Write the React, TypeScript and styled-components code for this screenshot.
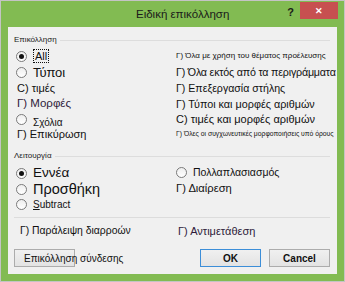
import styled, { createGlobalStyle } from "styled-components"

const GlobalStyle = createGlobalStyle`
  html, body {
    margin: 0;
    padding: 0;
    background: #ffffff;
  }
  * {
    box-sizing: border-box;
  }
`

export default function App() {
  return (
    <>
      <GlobalStyle />
      <DialogWindow>
        <TitleBar>
          <Title>Ειδική επικόλληση</Title>
          <HelpMark>?</HelpMark>
          <CloseButton>✕</CloseButton>
        </TitleBar>
        <Panel>
          <GroupHeader>
            <GroupLabel>Επικόλληση</GroupLabel>
            <GroupLine />
          </GroupHeader>
          <OptionGrid $rows="16px 17px 15px 16px 15px 14px">
            <Cell>
              <Radio $checked />
              <Label $size={11}>
                <FocusBox>All</FocusBox>
              </Label>
            </Cell>
            <Cell>
              <Label $size={8}>Γ) Όλα με χρήση του θέματος προέλευσης</Label>
            </Cell>
            <Cell>
              <Radio />
              <Label $size={13} $tight>
                Τύποι
              </Label>
            </Cell>
            <Cell>
              <Label $size={10.7} $tight>
                Γ) Όλα εκτός από τα περιγράμματα
              </Label>
            </Cell>
            <Cell $indent={1}>
              <Label $size={11}>C) τιμές</Label>
            </Cell>
            <Cell>
              <Label $size={10.6}>Γ) Επεξεργασία στήλης</Label>
            </Cell>
            <Cell $indent={1}>
              <Label $size={11.5} $color="#2e1b3a">
                Γ) Μορφές
              </Label>
            </Cell>
            <Cell>
              <Label $size={10.8}>Γ) Τύποι και μορφές αριθμών</Label>
            </Cell>
            <Cell>
              <Radio />
              <Label $size={10} $drop={3}>
                Σχόλια
              </Label>
            </Cell>
            <Cell>
              <Label $size={11}>C) τιμές και μορφές αριθμών</Label>
            </Cell>
            <Cell $indent={1}>
              <Label $size={11}>Γ) Επικύρωση</Label>
            </Cell>
            <Cell>
              <Label $size={6.8}>Γ) Όλες οι συγχωνευτικές μορφοποιήσεις υπό όρους</Label>
            </Cell>
          </OptionGrid>

          <GroupHeader $gap={10}>
            <GroupLabel>Λειτουργία</GroupLabel>
            <GroupLine />
          </GroupHeader>
          <OptionGrid $rows="16px 16px 15px" $gap={4}>
            <Cell>
              <Radio $checked />
              <Label $size={13.5}>Εννέα</Label>
            </Cell>
            <Cell $lift={2}>
              <Radio />
              <Label $size={10.5}>Πολλαπλασιασμός</Label>
            </Cell>
            <Cell>
              <Radio />
              <Label $size={14.5}>Προσθήκη</Label>
            </Cell>
            <Cell $lift={1}>
              <Label $size={11.2}>Γ) Διαίρεση</Label>
            </Cell>
            <Cell>
              <Radio />
              <Label $size={10}>
                <u>S</u>ubtract
              </Label>
            </Cell>
            <Cell />
          </OptionGrid>

          <Separator />

          <BottomRow>
            <Label $size={10.4}>Γ) Παράλειψη διαρροών</Label>
            <Label $size={11} $color="#2e1b3a">
              Γ) Αντιμετάθεση
            </Label>
          </BottomRow>

          <ButtonRow>
            <DialogButton $align="left">Επικόλληση σύνδεσης</DialogButton>
            <Spacer />
            <DialogButton $primary $bold>
              OK
            </DialogButton>
            <DialogButton $bold>Cancel</DialogButton>
          </ButtonRow>
        </Panel>
      </DialogWindow>
    </>
  )
}

const DialogWindow = styled.div`
  width: 345px;
  height: 282px;
  display: flex;
  flex-direction: column;
  background: #82bb52;
  border: 1px solid #c4c4c4;
  font-family: "Liberation Sans", Arial, sans-serif;
  color: #111;
`

const TitleBar = styled.div`
  height: 26px;
  display: flex;
  align-items: flex-start;
`

const Title = styled.div`
  flex: 1;
  padding-left: 77px;
  text-align: center;
  font-size: 11.5px;
  line-height: 26px;
  color: #1a1a1a;
`

const HelpMark = styled.div`
  margin-top: 6px;
  margin-right: 6px;
  font-size: 11px;
  font-weight: bold;
  line-height: 11px;
  color: #1a1a1a;
`

const CloseButton = styled.div`
  width: 38px;
  height: 17px;
  margin-top: 1px;
  margin-right: 6px;
  background: #c75050;
  color: #ffffff;
  font-size: 9px;
  font-weight: bold;
  display: flex;
  align-items: center;
  justify-content: center;
`

const Panel = styled.div`
  flex: 1;
  margin: 0 7px 7px;
  padding: 0 7px 0 6px;
  background: #f0f0f0;
  display: flex;
  flex-direction: column;
`

const GroupHeader = styled.div<{ $gap?: number }>`
  height: 10px;
  margin-top: ${(p) => p.$gap ?? 8}px;
  display: flex;
  align-items: center;
  gap: 3px;
`

const GroupLabel = styled.span`
  font-size: 8px;
  line-height: 10px;
  color: #1a1a1a;
`

const GroupLine = styled.div`
  flex: 1;
  height: 1px;
  background: #dddddd;
`

const OptionGrid = styled.div<{ $rows: string; $gap?: number }>`
  margin-top: ${(p) => p.$gap ?? 3}px;
  padding-left: 2px;
  display: grid;
  grid-template-columns: 160px 1fr;
  grid-template-rows: ${(p) => p.$rows};
`

const Cell = styled.div<{ $indent?: number; $lift?: number }>`
  display: flex;
  align-items: center;
  gap: 6px;
  padding-left: ${(p) => p.$indent ?? 0}px;
  white-space: nowrap;
  margin-top: ${(p) => -(p.$lift ?? 0)}px;
`

const Radio = styled.span<{ $checked?: boolean }>`
  flex: none;
  width: 11px;
  height: 11px;
  border-radius: 50%;
  border: 1px solid #7a7a7a;
  background: linear-gradient(#eeeeee, #ffffff);
  display: flex;
  align-items: center;
  justify-content: center;

  &::after {
    content: "";
    width: 5px;
    height: 5px;
    border-radius: 50%;
    background: ${(p) => (p.$checked ? "#111" : "transparent")};
  }
`

const Label = styled.span<{ $size: number; $color?: string; $drop?: number; $tight?: boolean }>`
  font-size: ${(p) => p.$size}px;
  line-height: 1;
  letter-spacing: ${(p) => (p.$tight ? "-0.2px" : "normal")};
  color: ${(p) => p.$color ?? "#111"};
  position: relative;
  top: ${(p) => p.$drop ?? 0}px;
`

const FocusBox = styled.span`
  border: 1px dotted #111;
  padding: 0 1px;
`

const Separator = styled.div`
  height: 1px;
  margin-top: 5px;
  background: #dcdcdc;
`

const BottomRow = styled.div`
  height: 14px;
  margin-top: 6px;
  padding-left: 6px;
  display: grid;
  grid-template-columns: 158px 1fr;
  align-items: center;
  white-space: nowrap;
`

const ButtonRow = styled.div`
  height: 18px;
  margin-top: 11px;
  display: flex;
  gap: 8px;
`

const Spacer = styled.div`
  flex: 1;
`

const DialogButton = styled.button<{ $primary?: boolean; $bold?: boolean; $align?: string }>`
  width: 61px;
  height: 18px;
  padding: ${(p) => (p.$align === "left" ? "0 0 0 9px" : "0")};
  background: linear-gradient(#f0f0f0, #e3e3e3);
  border: 1px solid ${(p) => (p.$primary ? "#3c8ed8" : "#acacac")};
  font-family: "Liberation Sans", Arial, sans-serif;
  font-size: 10px;
  font-weight: ${(p) => (p.$bold ? 600 : 400)};
  color: #111;
  text-align: ${(p) => p.$align ?? "center"};
  white-space: nowrap;
  overflow: visible;
`
